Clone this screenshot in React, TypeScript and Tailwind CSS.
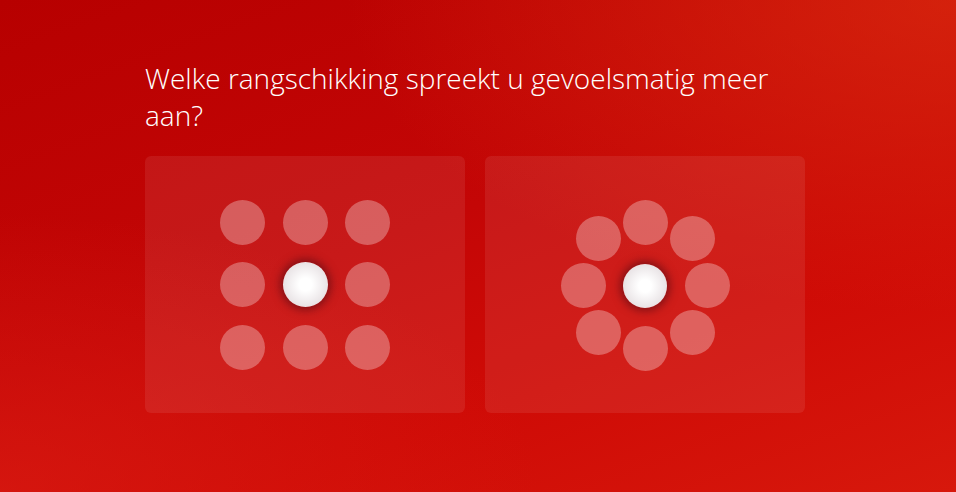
import React from 'react'

const gridDots = [0, 1, 2, 3, 4, 5, 6, 7, 8]

// offsets from card centre for the ring layout
const ringDots = [
  { x: 0, y: -63 },
  { x: 47, y: -47 },
  { x: 62, y: 0 },
  { x: 47, y: 47 },
  { x: 0, y: 63 },
  { x: -47, y: 47 },
  { x: -62, y: 0 },
  { x: -47, y: -47 },
]

function CenterDot({ size = 'w-[45px] h-[45px]' }: { size?: string }) {
  return (
    <div
      className={`${size} rounded-full bg-[radial-gradient(circle_at_50%_50%,#ffffff_0%,#ffffff_20%,#ebe6e8_65%,#d3cbce_100%)] shadow-[0_0_9px_3px_rgba(80,10,20,0.6)]`}
    />
  )
}

function Dot() {
  return <div className="w-[45px] h-[45px] rounded-full bg-white/30" />
}

export default function App() {
  return (
    <div className="w-[956px] h-[492px] overflow-hidden bg-[linear-gradient(160deg,#b70000_0%,#c40606_45%,#cf0b06_70%,#d7180c_100%)] relative font-['Open_Sans',sans-serif]">
      <div className="absolute inset-0 bg-[radial-gradient(ellipse_at_100%_0%,rgba(220,45,15,0.7)_0%,rgba(220,45,15,0)_45%)]" />
      <div className="absolute inset-0 bg-[radial-gradient(ellipse_at_0%_100%,rgba(220,30,20,0.6)_0%,rgba(220,30,20,0)_40%)]" />
      <div className="relative ml-[145px] w-[660px] pt-[60px]">
        <h1 className="text-white font-light text-[28px] leading-[37px]">
          Welke rangschikking spreekt u gevoelsmatig meer aan?
        </h1>

        <div className="mt-[22px] flex gap-[20px]">
          <button className="w-[320px] h-[257px] rounded-[6px] bg-white/[0.08] flex items-center justify-center">
            <div className="grid grid-cols-3 gap-[17.5px]">
              {gridDots.map(i =>
                i === 4 ? <CenterDot key={i} /> : <Dot key={i} />
              )}
            </div>
          </button>

          <button className="w-[320px] h-[257px] rounded-[6px] bg-white/[0.08] relative">
            {ringDots.map((d, i) => (
              <div
                key={i}
                className="absolute w-[45px] h-[45px] rounded-full bg-white/30"
                style={{ left: 160 + d.x - 22.5, top: 129 + d.y - 22.5 }}
              />
            ))}
            <div className="absolute left-[138px] top-[107.5px]">
              <CenterDot size="w-[44px] h-[44px]" />
            </div>
          </button>
        </div>
      </div>
    </div>
  )
}
